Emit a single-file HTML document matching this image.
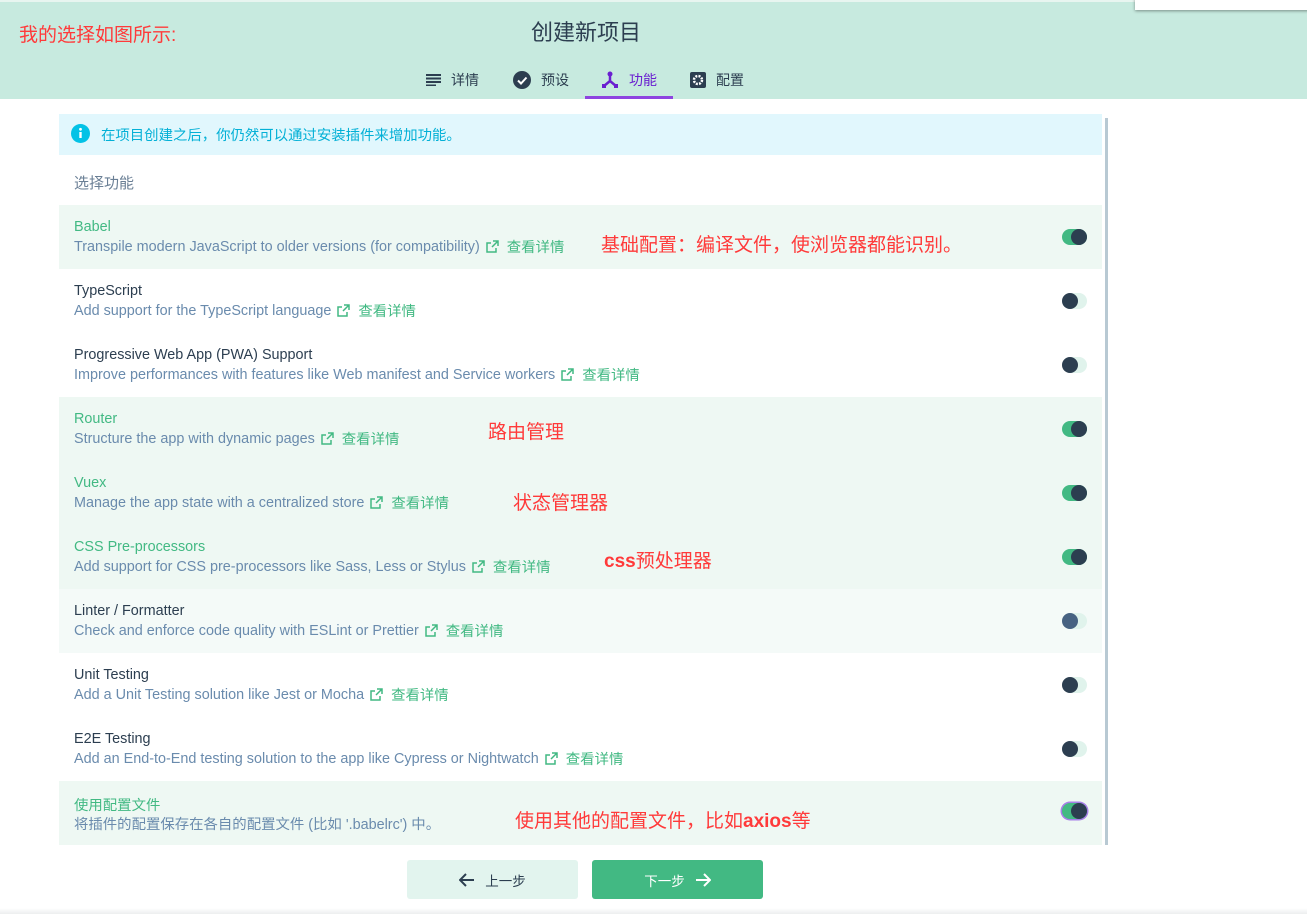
<!DOCTYPE html>
<html><head><meta charset="utf-8"><style>
*{margin:0;padding:0;box-sizing:border-box}
body{width:1307px;height:914px;overflow:hidden;background:#fff;font-family:"Liberation Sans","Noto Sans CJK SC",sans-serif;position:relative}
.hdr{position:absolute;left:0;top:0;width:1307px;height:99px;background:#c7eadf;border-top:2px solid #e8f5f0}
.abs{position:absolute;white-space:nowrap}
.red{color:#ff3a3a;font-size:19px}
.tab{position:absolute;top:70px;font-size:14px;color:#2c3e50;display:flex;align-items:center;gap:10px}
.row{position:absolute;left:59px;width:1043px;height:64px}
.row.sel{background:#eef8f3}
.t{position:absolute;left:15px;top:14px;font-size:14.4px;color:#2c3e50}
.sel .t{color:#42b983}
.d{position:absolute;left:15px;top:31px;font-size:14.4px;color:#6a8bad;display:flex;align-items:center}
.d .lk{color:#42b983;margin-left:8px}
.d svg{margin-left:6px}
.tg{position:absolute;left:1003px;top:24px;width:25px;height:16px;border-radius:8px;background:#e0f3ec}
.tg i{position:absolute;top:0;left:0;width:16px;height:16px;border-radius:50%;background:#2c3e50}
.sel .tg{background:#42b983}
.sel .tg i{left:9px}
</style></head><body>
<div class="hdr"></div>
<div class="abs" style="left:1135px;top:-2px;width:175px;height:12px;background:#fff;box-shadow:0 1px 3px rgba(0,0,0,.4)"></div>
<div class="abs red" style="left:19px;top:20px">我的选择如图所示:</div>
<div class="abs" style="left:531px;top:15px;font-size:22px;color:#2c3e50">创建新项目</div>
<div class="tab" style="left:426px"><svg width="15" height="12"><rect y="0" width="15" height="2" fill="#2c3e50"/><rect y="3.5" width="15" height="2" fill="#2c3e50"/><rect y="7" width="15" height="2" fill="#2c3e50"/><rect y="10.5" width="10" height="1.5" fill="#2c3e50"/></svg>详情</div>
<div class="tab" style="left:513px"><svg width="18" height="18"><circle cx="9" cy="9" r="9" fill="#2c3e50"/><path d="M5 9.5l3 3 5.5-6" stroke="#fff" stroke-width="2" fill="none"/></svg>预设</div>
<div class="tab" style="left:601px;color:#6a1fd0"><svg width="18" height="18"><path d="M9 3v7L3 15M9 10l6 5" stroke="#6a1fd0" stroke-width="2.5" fill="none"/><circle cx="9" cy="3" r="2.5" fill="#6a1fd0"/><rect x="1" y="13" width="4" height="4" fill="#6a1fd0"/><rect x="13" y="13" width="4" height="4" fill="#6a1fd0"/></svg>功能</div>
<div class="abs" style="left:585px;top:96px;width:88px;height:3px;background:#8e44e0"></div>
<div class="tab" style="left:690px"><svg width="16" height="16"><rect width="16" height="16" rx="2" fill="#2c3e50"/><circle cx="8" cy="8" r="4" fill="none" stroke="#fff" stroke-width="2.5" stroke-dasharray="2 1.2"/><circle cx="8" cy="8" r="1.5" fill="#2c3e50"/></svg>配置</div>

<div class="abs" style="left:59px;top:114px;width:1043px;height:41px;background:#e1f7fd"></div>
<svg class="abs" style="left:71px;top:124px" width="19" height="19"><circle cx="9.5" cy="9.5" r="9.5" fill="#03c2e6"/><rect x="8.3" y="8" width="2.4" height="6" fill="#fff"/><circle cx="9.5" cy="5.3" r="1.4" fill="#fff"/></svg>
<div class="abs" style="left:101px;top:124px;font-size:14.4px;color:#03b0d6">在项目创建之后，你仍然可以通过安装插件来增加功能。</div>
<div class="abs" style="left:74px;top:172px;font-size:15px;color:#6a7f95">选择功能</div>
<div class="abs" style="left:1105px;top:118px;width:3px;height:727px;background:#b8c9d3"></div>

<div class="row sel" style="top:205px"><div class="t">Babel</div><div class="d">Transpile modern JavaScript to older versions (for compatibility)<svg width="13" height="13"><path d="M7 1h5v5M12 1L6 7M10 8v4H1V3h4" stroke="#42b983" stroke-width="1.5" fill="none"/></svg><span class="lk">查看详情</span></div><div class="tg"><i></i></div></div>
<div class="row" style="top:269px"><div class="t">TypeScript</div><div class="d">Add support for the TypeScript language<svg width="13" height="13"><path d="M7 1h5v5M12 1L6 7M10 8v4H1V3h4" stroke="#42b983" stroke-width="1.5" fill="none"/></svg><span class="lk">查看详情</span></div><div class="tg"><i></i></div></div>
<div class="row" style="top:333px"><div class="t">Progressive Web App (PWA) Support</div><div class="d">Improve performances with features like Web manifest and Service workers<svg width="13" height="13"><path d="M7 1h5v5M12 1L6 7M10 8v4H1V3h4" stroke="#42b983" stroke-width="1.5" fill="none"/></svg><span class="lk">查看详情</span></div><div class="tg"><i></i></div></div>
<div class="row sel" style="top:397px"><div class="t">Router</div><div class="d">Structure the app with dynamic pages<svg width="13" height="13"><path d="M7 1h5v5M12 1L6 7M10 8v4H1V3h4" stroke="#42b983" stroke-width="1.5" fill="none"/></svg><span class="lk">查看详情</span></div><div class="tg"><i></i></div></div>
<div class="row sel" style="top:461px"><div class="t">Vuex</div><div class="d">Manage the app state with a centralized store<svg width="13" height="13"><path d="M7 1h5v5M12 1L6 7M10 8v4H1V3h4" stroke="#42b983" stroke-width="1.5" fill="none"/></svg><span class="lk">查看详情</span></div><div class="tg"><i></i></div></div>
<div class="row sel" style="top:525px"><div class="t">CSS Pre-processors</div><div class="d">Add support for CSS pre-processors like Sass, Less or Stylus<svg width="13" height="13"><path d="M7 1h5v5M12 1L6 7M10 8v4H1V3h4" stroke="#42b983" stroke-width="1.5" fill="none"/></svg><span class="lk">查看详情</span></div><div class="tg"><i></i></div></div>
<div class="row" style="top:589px;background:#f4faf8"><div class="t">Linter / Formatter</div><div class="d">Check and enforce code quality with ESLint or Prettier<svg width="13" height="13"><path d="M7 1h5v5M12 1L6 7M10 8v4H1V3h4" stroke="#42b983" stroke-width="1.5" fill="none"/></svg><span class="lk">查看详情</span></div><div class="tg"><i style="background:#476282"></i></div></div>
<div class="row" style="top:653px"><div class="t">Unit Testing</div><div class="d">Add a Unit Testing solution like Jest or Mocha<svg width="13" height="13"><path d="M7 1h5v5M12 1L6 7M10 8v4H1V3h4" stroke="#42b983" stroke-width="1.5" fill="none"/></svg><span class="lk">查看详情</span></div><div class="tg"><i></i></div></div>
<div class="row" style="top:717px"><div class="t">E2E Testing</div><div class="d">Add an End-to-End testing solution to the app like Cypress or Nightwatch<svg width="13" height="13"><path d="M7 1h5v5M12 1L6 7M10 8v4H1V3h4" stroke="#42b983" stroke-width="1.5" fill="none"/></svg><span class="lk">查看详情</span></div><div class="tg"><i></i></div></div>
<div class="row sel" style="top:781px"><div class="t" style="top:13px">使用配置文件</div><div class="d" style="top:32px">将插件的配置保存在各自的配置文件 (比如 '.babelrc') 中。</div><div class="tg" style="top:22px;box-shadow:0 0 0 1.5px #a77ee8"><i></i></div></div>

<div class="abs red" style="left:601px;top:230px">基础配置：编译文件，使浏览器都能识别。</div>
<div class="abs red" style="left:488px;top:417px">路由管理</div>
<div class="abs red" style="left:513px;top:488px">状态管理器</div>
<div class="abs red" style="left:604px;top:546px;font-weight:bold">css<span style="font-weight:normal">预处理器</span></div>
<div class="abs red" style="left:515px;top:806px">使用其他的配置文件，比如<b>axios</b>等</div>

<div class="abs" style="left:407px;top:860px;width:171px;height:39px;background:#e2f4ee;border-radius:3px;display:flex;align-items:center;justify-content:center;gap:10px;font-size:13.5px;color:#2c3e50"><svg width="16" height="14"><path d="M15 7H2M7 1L1 7l6 6" stroke="#2c3e50" stroke-width="2" fill="none"/></svg>上一步</div>
<div class="abs" style="left:592px;top:860px;width:171px;height:39px;background:#42b983;border-radius:3px;display:flex;align-items:center;justify-content:center;gap:10px;font-size:13.5px;color:#fff">下一步<svg width="16" height="14"><path d="M1 7h13M9 1l6 6-6 6" stroke="#fff" stroke-width="2" fill="none"/></svg></div>
<div class="abs" style="left:0;top:908px;width:1307px;height:6px;background:linear-gradient(#fff,#eceeef)"></div>
</body></html>
